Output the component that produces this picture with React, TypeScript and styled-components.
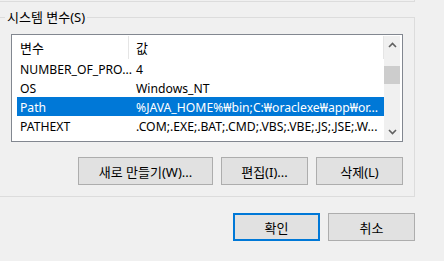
import styled, { createGlobalStyle } from "styled-components";

const GlobalStyle = createGlobalStyle`
  html, body {
    margin: 0;
    padding: 0;
    background: #f0f0f0;
    font-family: "Noto Sans", "Noto Sans CJK KR", sans-serif;
    font-size: 13px;
    color: #000;
    overflow: hidden;
  }
`;

const Window = styled.div`
  width: 444px;
  height: 261px;
  background: #f0f0f0;
`;

const PrevGroupEdge = styled.div`
  width: 414px;
  height: 1px;
  border-right: 1px solid #dcdcdc;
  border-bottom: 1px solid #dcdcdc;
`;

const Group = styled.fieldset`
  box-sizing: border-box;
  width: 417px;
  margin: 7px 0 0 -2px;
  padding: 9px 0 11px 6px;
  border: 1px solid #dcdcdc;
`;

const Legend = styled.legend`
  padding: 0 2px;
  line-height: 16px;
`;

const ListBox = styled.div`
  box-sizing: border-box;
  width: 392px;
  height: 108px;
  margin-left: 6px;
  padding: 1px;
  border: 1px solid #828790;
  background: #fff;
  display: flex;
`;

const Table = styled.div`
  flex: 1;
  display: flex;
  flex-direction: column;
`;

const HeaderRow = styled.div`
  height: 23px;
  display: flex;
  align-items: stretch;
`;

const HeaderCell = styled.div<{ $w?: number }>`
  box-sizing: border-box;
  ${(p) => (p.$w ? `width: ${p.$w}px;` : "flex: 1;")}
  padding-left: 7px;
  display: flex;
  align-items: center;
  border-right: 1px solid #e5e5e5;
`;

const Row = styled.div<{ $selected?: boolean }>`
  height: 19px;
  margin-left: 4px;
  display: flex;
  align-items: center;
  padding-top: 1px;
  box-sizing: border-box;
  font-size: 12.2px;
  background: ${(p) => (p.$selected ? "#0078d7" : "transparent")};
  color: ${(p) => (p.$selected ? "#fff" : "#000")};
`;

const Cell = styled.div<{ $w?: number; $pad: number }>`
  box-sizing: border-box;
  ${(p) => (p.$w ? `width: ${p.$w}px; flex-shrink: 0;` : "flex: 1;")}
  padding-left: ${(p) => p.$pad}px;
  white-space: nowrap;
`;

const ScrollBar = styled.div`
  width: 16px;
  margin-right: 1px;
  background: #f0f0f0;
  display: flex;
  flex-direction: column;
  align-items: center;
`;

const Arrow = styled.div`
  height: 17px;
  display: flex;
  align-items: center;
  justify-content: center;
`;

const Thumb = styled.div`
  width: 16px;
  height: 18px;
  margin-top: 13px;
  background: #cdcdcd;
`;

const Spacer = styled.div`
  flex: 1;
`;

const ButtonRow = styled.div<{ $w: number; $ml: number; $mt: number }>`
  width: ${(p) => p.$w}px;
  margin: ${(p) => p.$mt}px 0 0 ${(p) => p.$ml}px;
  display: flex;
  justify-content: flex-end;
  gap: 8px;
`;

const Button = styled.button<{ $w: number; $default?: boolean }>`
  box-sizing: border-box;
  width: ${(p) => p.$w}px;
  height: 28px;
  padding: 0;
  background: #e1e1e1;
  border: ${(p) => (p.$default ? "2px solid #0078d7" : "1px solid #adadad")};
  font-family: inherit;
  font-size: 13px;
  color: #000;
`;

const rows = [
  { name: "NUMBER_OF_PRO...", value: "4" },
  { name: "OS", value: "Windows_NT" },
  { name: "Path", value: "%JAVA_HOME%₩bin;C:₩oraclexe₩app₩or...", selected: true },
  { name: "PATHEXT", value: ".COM;.EXE;.BAT;.CMD;.VBS;.VBE;.JS;.JSE;.W..." },
];

function Chevron({ down }: { down?: boolean }) {
  return (
    <svg width="9" height="6" viewBox="0 0 9 6">
      <path
        d={down ? "M1 1 L4.5 4.5 L8 1" : "M1 5 L4.5 1.5 L8 5"}
        fill="none"
        stroke="#606060"
        strokeWidth="1.6"
      />
    </svg>
  );
}

export default function App() {
  return (
    <Window>
      <GlobalStyle />
      <PrevGroupEdge />
      <Group>
        <Legend>시스템 변수(S)</Legend>
        <ListBox>
          <Table>
            <HeaderRow>
              <HeaderCell $w={116}>변수</HeaderCell>
              <HeaderCell>값</HeaderCell>
            </HeaderRow>
            {rows.map((r) => (
              <Row key={r.name} $selected={r.selected}>
                <Cell $w={112} $pad={3}>
                  {r.name}
                </Cell>
                <Cell $pad={7}>{r.value}</Cell>
              </Row>
            ))}
          </Table>
          <ScrollBar>
            <Arrow>
              <Chevron />
            </Arrow>
            <Thumb />
            <Spacer />
            <Arrow>
              <Chevron down />
            </Arrow>
          </ScrollBar>
        </ListBox>
        <ButtonRow $w={392} $ml={6} $mt={15}>
          <Button $w={135}>새로 만들기(W)...</Button>
          <Button $w={87}>편집(I)...</Button>
          <Button $w={87}>삭제(L)</Button>
        </ButtonRow>
      </Group>
      <ButtonRow $w={415} $ml={0} $mt={16}>
        <Button $w={87} $default>
          확인
        </Button>
        <Button $w={87}>취소</Button>
      </ButtonRow>
    </Window>
  );
}
